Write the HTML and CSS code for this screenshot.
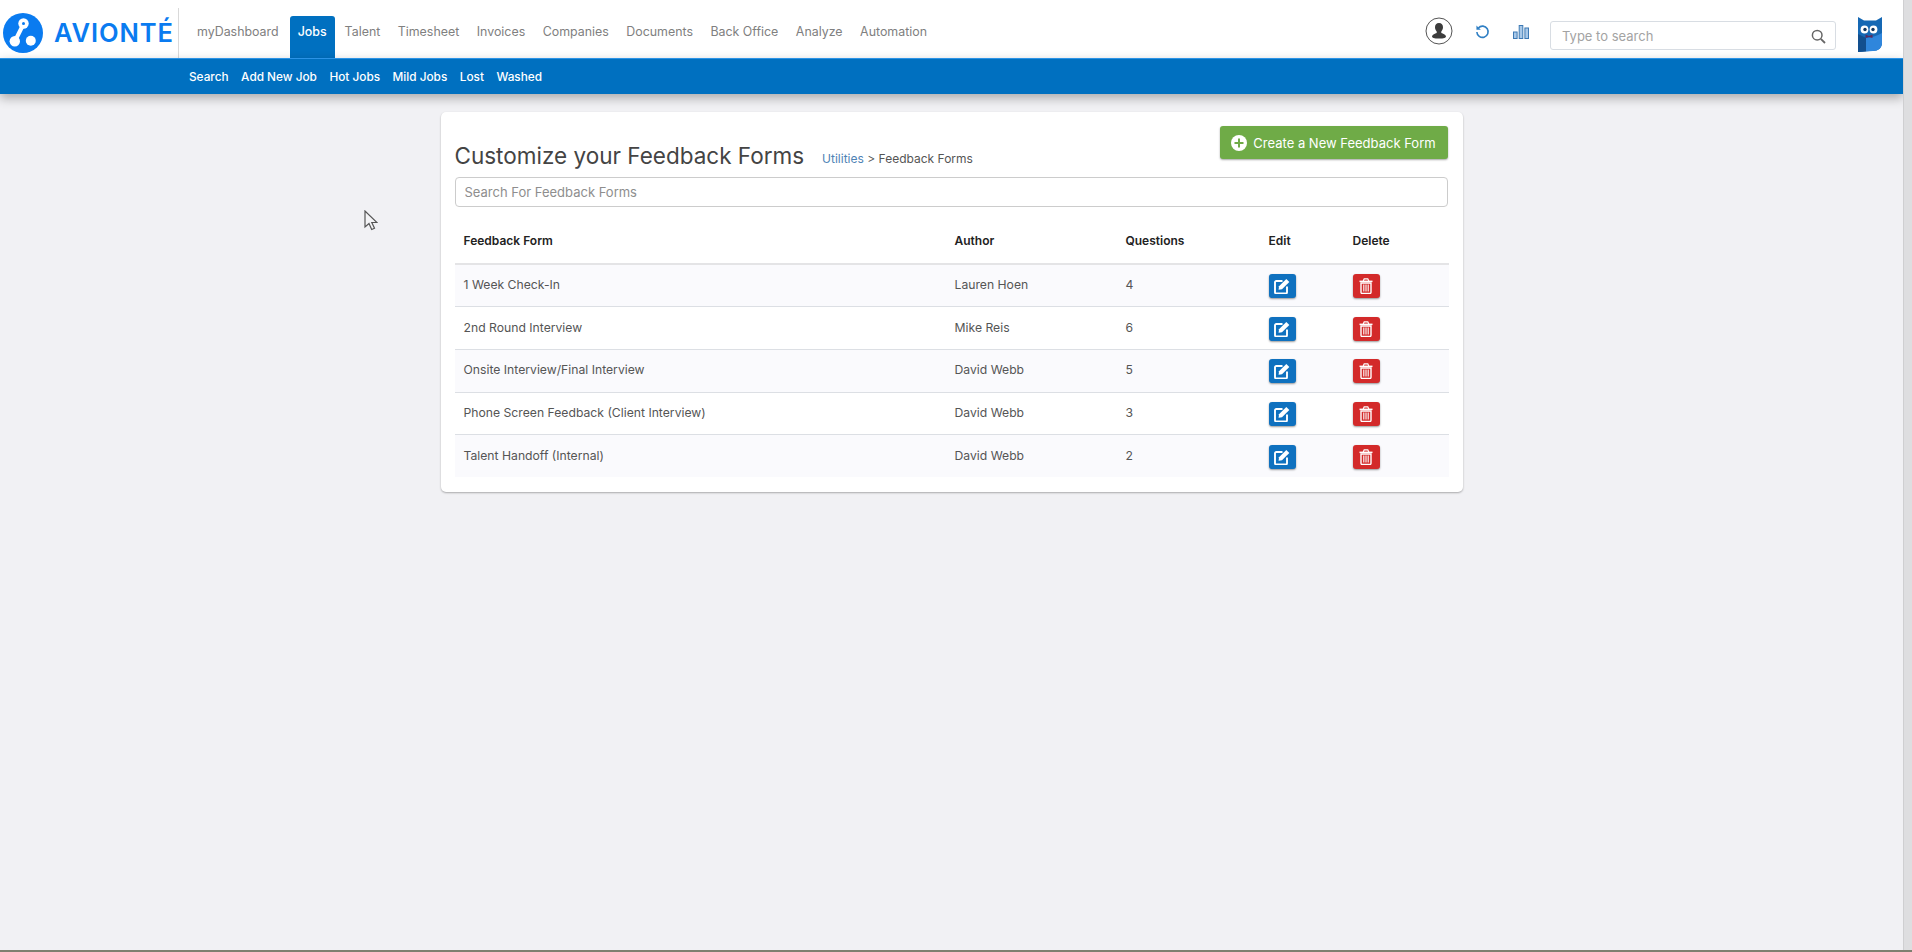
FILE: index.html
```html
<!DOCTYPE html>
<html lang="en">
<head>
    <meta charset="utf-8" />
    <title>Customize your Feedback Forms</title>
    <link rel="stylesheet" href="styles.css">
</head>
<body>
    <div class="frame">
        <div class="page">
            <header class="topbar">
                <a class="brand" href="#">
                    <svg class="brand-mark" viewBox="0 0 40 40">
                        <circle cx="20" cy="20" r="20" fill="#0a7bf0" />
                        <path d="M20.500 11 L12 28" stroke="#fff" stroke-width="4" fill="none" />
                        <circle cx="20.500" cy="10.500" r="5.200" fill="#fff" />
                        <circle cx="20.500" cy="10.500" r="1.500" fill="#0a7bf0" />
                        <circle cx="11.800" cy="28.300" r="5.200" fill="#fff" />
                        <circle cx="27.800" cy="27.800" r="5" fill="#fff" />
                    </svg>
                    <span class="brand-name">AVIONTÉ</span>
                </a>
                <nav class="mainnav">
                    <a href="#">myDashboard</a>
                    <a class="active" href="#">Jobs</a>
                    <a href="#">Talent</a>
                    <a href="#">Timesheet</a>
                    <a href="#">Invoices</a>
                    <a href="#">Companies</a>
                    <a href="#">Documents</a>
                    <a href="#">Back Office</a>
                    <a href="#">Analyze</a>
                    <a href="#">Automation</a>
                </nav>
                <div class="tools">
                    <svg class="tool-user" viewBox="0 0 28 28">
                        <circle cx="14" cy="14" r="13" fill="#fff" stroke="#555" stroke-width="1" />
                        <path d="M14 6c-2.600 0-4 1.900-4 4.200 0 1.700.7 3.200 1.700 4.200v1.600c-1.900.8-4 1.500-4.700 3.200 0 1.500 2 2.300 7 2.300s7-.8 7-2.300c-.7-1.700-2.800-2.400-4.700-3.200v-1.600c1-1 1.700-2.500 1.700-4.200C18 7.900 16.600 6 14 6z" fill="#3c3c3c" />
                    </svg>
                    <svg class="tool-undo" viewBox="0 0 16 16">
                        <path d="M3.600 4.200A6 6 0 1 1 2 8.500" fill="none" stroke="#2f7fc4" stroke-width="1.700" />
                        <path d="M1.500 1.500v4.700h4.700z" fill="#2f7fc4" />
                    </svg>
                    <svg class="tool-bars" viewBox="0 0 16 14">
                        <rect x="0.500" y="7" width="3.600" height="6.500" fill="#a8c8e8" stroke="#3d79b4" />
                        <rect x="6.200" y="0.500" width="3.600" height="13" fill="#a8c8e8" stroke="#3d79b4" />
                        <rect x="11.900" y="3" width="3.600" height="10.500" fill="#a8c8e8" stroke="#3d79b4" />
                    </svg>
                    <label class="topsearch">
                        <input type="text" placeholder="Type to search" />
                        <svg viewBox="0 0 15 15">
                            <circle cx="6.200" cy="6.200" r="4.800" fill="none" stroke="#666" stroke-width="1.500" />
                            <path d="M9.800 9.800l4.200 4.200" stroke="#666" stroke-width="1.800" />
                        </svg>
                    </label>
                    <svg class="owl" viewBox="0 0 24 35">
                        <path d="M0 0l6 3.500h12L24 0v26c0 5-4 8-9 8-5 0-9 .5-15 1z" fill="#1568b4" />
                        <path d="M8 21c5-.5 11-2 16-5v10c0 5-4 8-9 8l-7 .5z" fill="#2f86dc" />
                        <path d="M0 17l8 4v13.500l-8 .5z" fill="#124f8e" />
                        <circle cx="6.500" cy="12.500" r="3.900" fill="#fff" />
                        <circle cx="15.500" cy="12.500" r="3.900" fill="#fff" />
                        <circle cx="7" cy="12.500" r="1.700" fill="#12365e" />
                        <circle cx="15" cy="12.500" r="1.700" fill="#12365e" />
                        <path d="M7.500 17.500l3.500 1.500 3.500-1.500v3.500l-3.500-1-3.500 1z" fill="#5b2a5e" />
                    </svg>
                </div>
            </header>
            <nav class="subnav">
                <a href="#">Search</a>
                <a href="#">Add New Job</a>
                <a href="#">Hot Jobs</a>
                <a href="#">Mild Jobs</a>
                <a href="#">Lost</a>
                <a href="#">Washed</a>
            </nav>
            <main class="content">
                <section class="card">
                    <div class="card-head">
                        <h1>Customize your Feedback Forms</h1>
                        <div class="crumbs"><a href="#">Utilities</a> &gt; Feedback Forms</div>
                        <button class="btn-create">
                            <svg viewBox="0 0 16 16">
                                <circle cx="8" cy="8" r="8" fill="#fff" />
                                <path d="M8 3.500v9M3.500 8h9" stroke="#6fab47" stroke-width="2" />
                            </svg>
                            Create a New Feedback Form
                        </button>
                    </div>
                    <input class="form-search" type="text" placeholder="Search For Feedback Forms" />
                    <table class="forms">
                        <thead>
                            <tr>
                                <th class="col-name">Feedback Form</th>
                                <th class="col-author">Author</th>
                                <th class="col-count">Questions</th>
                                <th class="col-edit">Edit</th>
                                <th>Delete</th>
                            </tr>
                        </thead>
                        <tbody>
                            <tr>
                                <td>1 Week Check-In</td>
                                <td>Lauren Hoen</td>
                                <td>4</td>
                                <td><button class="icon-btn edit"><svg viewBox="0 0 16 16"><use href="#i-edit" /></svg></button></td>
                                <td><button class="icon-btn del"><svg viewBox="0 0 16 16"><use href="#i-trash" /></svg></button></td>
                            </tr>
                            <tr>
                                <td>2nd Round Interview</td>
                                <td>Mike Reis</td>
                                <td>6</td>
                                <td><button class="icon-btn edit"><svg viewBox="0 0 16 16"><use href="#i-edit" /></svg></button></td>
                                <td><button class="icon-btn del"><svg viewBox="0 0 16 16"><use href="#i-trash" /></svg></button></td>
                            </tr>
                            <tr>
                                <td>Onsite Interview/Final Interview</td>
                                <td>David Webb</td>
                                <td>5</td>
                                <td><button class="icon-btn edit"><svg viewBox="0 0 16 16"><use href="#i-edit" /></svg></button></td>
                                <td><button class="icon-btn del"><svg viewBox="0 0 16 16"><use href="#i-trash" /></svg></button></td>
                            </tr>
                            <tr>
                                <td>Phone Screen Feedback (Client Interview)</td>
                                <td>David Webb</td>
                                <td>3</td>
                                <td><button class="icon-btn edit"><svg viewBox="0 0 16 16"><use href="#i-edit" /></svg></button></td>
                                <td><button class="icon-btn del"><svg viewBox="0 0 16 16"><use href="#i-trash" /></svg></button></td>
                            </tr>
                            <tr>
                                <td>Talent Handoff (Internal)</td>
                                <td>David Webb</td>
                                <td>2</td>
                                <td><button class="icon-btn edit"><svg viewBox="0 0 16 16"><use href="#i-edit" /></svg></button></td>
                                <td><button class="icon-btn del"><svg viewBox="0 0 16 16"><use href="#i-trash" /></svg></button></td>
                            </tr>
                        </tbody>
                    </table>
                </section>
            </main>
        </div>
        <div class="scrollstrip"></div>
    </div>
    <div class="taskline"></div>

    <svg class="cursor" viewBox="0 0 14 21">
        <path d="M1 1v16l4-3.500 2.700 6 2.800-1.200-2.700-5.800H13z" fill="#f4f4f6" stroke="#555" stroke-width="1.200" />
    </svg>

    <svg class="sprites" width="0" height="0">
        <symbol id="i-edit" viewBox="0 0 16 16">
            <path d="M8.500 3H2.300c-.8 0-1.300.5-1.300 1.300v9.900c0 .8.500 1.300 1.300 1.300h9.400c.8 0 1.300-.5 1.300-1.300V8.500" fill="none" stroke="#fff" stroke-width="1.900" />
            <path d="M5 8.300L12.300 1l3 3-7.300 7.300-3.400.5z" fill="#fff" />
        </symbol>
        <symbol id="i-trash" viewBox="0 0 16 16">
            <path d="M1.500 2.600h13v1.500h-13z" fill="#fff" />
            <path d="M5.200 3l1-2.200h3.600l1 2.200" fill="none" stroke="#fff" stroke-width="1.200" />
            <path d="M3 5h10v9.300c0 .8-.5 1.200-1.200 1.200H4.200c-.7 0-1.200-.4-1.200-1.200z" fill="none" stroke="#fff" stroke-width="1.400" />
            <path d="M5.800 6.500v7M8 6.500v7M10.200 6.500v7" stroke="#fff" stroke-width="1.100" />
        </symbol>
    </svg>
</body>
</html>
```

FILE: styles.css
```css
* {
    box-sizing: border-box;
}
html, body {
    height: 100%;
}
body {
    margin: 0;
    display: flex;
    flex-direction: column;
    overflow: hidden;
    font-family: Inter, "Noto Sans", sans-serif;
    font-size: 12.5px;
    color: #555;
    background-color: #f1f1f4;
}
a {
    color: inherit;
    text-decoration: none;
}
.frame {
    flex: 1;
    min-height: 0;
    display: flex;
}
.page {
    flex: 1;
    min-width: 0;
    display: flex;
    flex-direction: column;
}
.scrollstrip {
    width: 9px;
    background-color: #dedee0;
    border-left: 1px solid #cfcfd1;
}
.taskline {
    height: 2px;
    background-color: #7d8070;
}

/* top bar */
.topbar {
    height: 58px;
    display: flex;
    align-items: flex-end;
    background-color: #fff;
}
.brand {
    width: 179px;
    height: 50px;
    display: flex;
    align-items: center;
    gap: 11px;
    padding: 0 0 1px 3px;
    border-right: 1px solid #d9d9d9;
}
.brand-mark {
    width: 40px;
    height: 40px;
}
.brand-name {
    font-size: 25.5px;
    font-weight: 600;
    color: #0a7bf0;
    letter-spacing: 0.9px;
}
.mainnav {
    display: flex;
    align-items: stretch;
    height: 42px;
    margin-left: 18px;
    gap: 17.5px;
    font-size: 12.4px;
    color: #808080;
}
.mainnav a {
    display: flex;
    align-items: center;
    padding-bottom: 11px;
}
.mainnav a.active {
    width: 45px;
    justify-content: center;
    margin: 0 -7.5px 0 -6.5px;
    color: #fff;
    font-weight: 500;
    background-color: #0070c0;
    border-radius: 3px 3px 0 0;
}
.tools {
    margin-left: auto;
    align-self: stretch;
    display: flex;
    align-items: center;
    padding-right: 21px;
}
.tool-user {
    width: 28px;
    height: 28px;
    margin: 3px 22px 0 0;
}
.tool-undo {
    width: 15px;
    height: 15px;
    margin: 5px 23px 0 0;
}
.tool-bars {
    width: 16px;
    height: 14px;
    margin: 5px 21px 0 0;
}
.topsearch {
    width: 286px;
    height: 29px;
    margin-top: 13px;
    margin-right: 22px;
    padding: 0 9px 0 11px;
    display: flex;
    align-items: center;
    border: 1px solid #d8dde3;
    border-radius: 3px;
}
.topsearch input {
    flex: 1;
    min-width: 0;
    border: 0;
    outline: 0;
    padding: 0;
    font: inherit;
    font-size: 13px;
}
.topsearch input::placeholder {
    color: #a3a3a3;
}
.topsearch svg {
    width: 15px;
    height: 15px;
    margin-top: 2px;
}
.owl {
    width: 24px;
    height: 35px;
    margin-top: 11px;
}

/* blue sub nav */
.subnav {
    height: 36px;
    display: flex;
    align-items: center;
    gap: 12.5px;
    padding: 0 0 0 189px;
    font-size: 11.8px;
    font-weight: 500;
    color: #fff;
    background-color: #0070c0;
    border-top: 1px solid #2b93e6;
    box-shadow: 0 4px 10px rgba(0, 0, 0, 0.3);
}

/* content */
.content {
    flex: 1;
    display: flex;
    justify-content: center;
    align-items: flex-start;
    padding-top: 18px;
}
.card {
    width: 1022px;
    height: 380px;
    padding: 14px 14px 0;
    background-color: #fff;
    border-radius: 5px;
    box-shadow: 0 1px 2px rgba(0, 0, 0, 0.3);
}
.card-head {
    height: 51px;
    display: flex;
    align-items: flex-start;
}
.card-head h1 {
    margin: 16px 0 0;
    font-size: 22.5px;
    font-weight: 400;
    color: #444;
    white-space: nowrap;
}
.crumbs {
    margin: 25px 0 0 18px;
    font-size: 12px;
    color: #555;
}
.crumbs a {
    color: #4f83b5;
}
.btn-create {
    margin-left: auto;
    margin-right: 1px;
    width: 228px;
    height: 33px;
    display: flex;
    align-items: center;
    justify-content: center;
    gap: 6px;
    padding: 0;
    border: 0;
    border-radius: 3px;
    font: inherit;
    font-size: 13px;
    color: #fff;
    background-color: #6fab47;
    box-shadow: 0 1px 2px rgba(0, 0, 0, 0.35);
}
.btn-create svg {
    width: 16px;
    height: 16px;
}
.form-search {
    display: block;
    width: calc(100% - 1px);
    height: 30px;
    padding: 0 9px;
    border: 1px solid #ccc;
    border-radius: 4px;
    outline: 0;
    font: inherit;
    font-size: 13px;
}
.form-search::placeholder {
    color: #8e8e8e;
}

/* table */
.forms {
    width: 100%;
    border-collapse: collapse;
    table-layout: fixed;
}
.forms th {
    height: 57px;
    padding: 11px 9px 0;
    text-align: left;
    font-size: 12px;
    font-weight: 600;
    color: #222;
    border-bottom: 2px solid #e4e4e6;
}
.col-name {
    width: 491px;
}
.col-author {
    width: 171px;
}
.col-count {
    width: 143px;
}
.col-edit {
    width: 84px;
}
.forms td {
    height: 42.7px;
    padding: 0 9px 2px;
    font-size: 12.2px;
    border-top: 1px solid #dcdfe4;
}
.forms tbody tr:first-child td {
    border-top: 0;
}
.forms tbody tr:nth-child(odd) td {
    background-color: #fafafd;
}
.icon-btn {
    display: block;
    width: 27px;
    height: 24px;
    margin-top: 3px;
    padding: 0;
    border: 0;
    border-radius: 3px;
    box-shadow: 0 1px 2px rgba(0, 0, 0, 0.4);
}
.icon-btn svg {
    display: block;
    width: 16px;
    height: 16px;
    margin: 4px auto;
}
.icon-btn.edit {
    background-color: #0f71bf;
}
.icon-btn.del {
    background-color: #d32a2a;
}

/* mouse pointer caught in the capture */
.cursor {
    position: absolute;
    left: 364px;
    top: 210px;
    width: 14px;
    height: 21px;
}
.sprites {
    position: absolute;
}
```
